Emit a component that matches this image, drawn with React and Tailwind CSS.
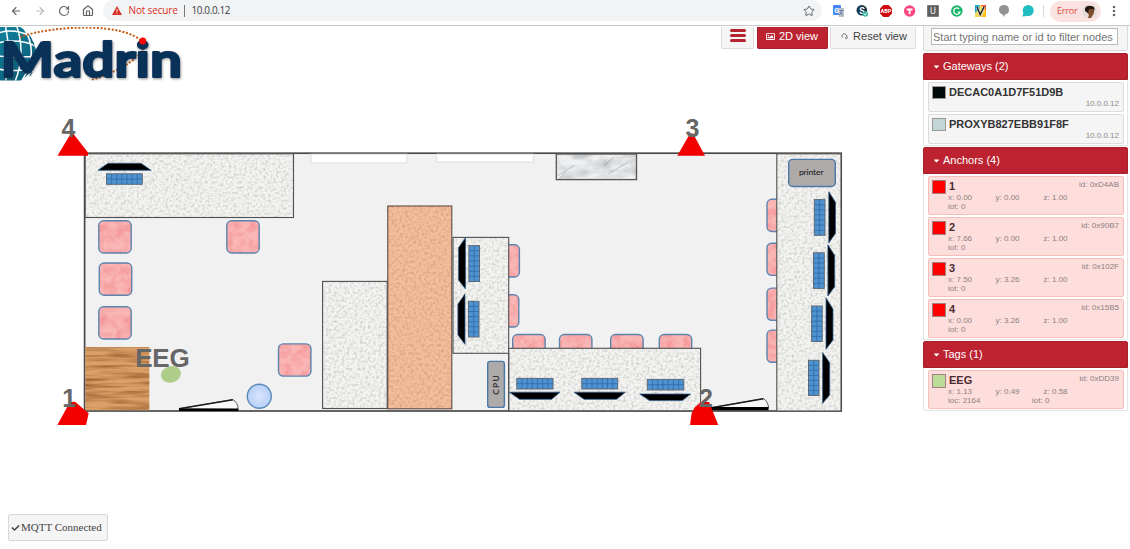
import React from "react";
import { ArrowLeft, ArrowRight, RotateCw, House, Star, MoreVertical } from "lucide-react";
import { FaCheck, FaCaretDown, FaRegImage } from "react-icons/fa";

const r = (x1, y1, x2, y2) => ({ x: x1, y: y1, width: x2 - x1, height: y2 - y1 });

const chairs = [
  [98.8, 220.8], [226.8, 220.8], [99.3, 263], [98.8, 306.8], [278.5, 343.9],
  [487, 244.8], [486.4, 294.8], [512.7, 334.5], [559.5, 334.5], [610.7, 334.5], [659.3, 334.5],
  [767, 199.3], [767, 243.2], [767, 288.1], [767, 330.1],
];

const keyboards = [
  [106.5, 173.8, 142.3, 184.3], [468.9, 245.6, 479.5, 281.5], [468.4, 301.3, 479, 337],
  [516.8, 378.4, 553, 389], [581.8, 378.4, 617.7, 389], [647.3, 379.4, 683.8, 390],
  [814.3, 199.6, 825, 235.3], [813.5, 252.8, 824.3, 288.4], [811.6, 306, 822.2, 341.5],
  [808.5, 360.3, 819, 395.5],
];

const monitors = [
  "98,170.3 108,163.3 141,163.3 151,170.3",
  "465.5,237.7 458.5,247.7 458.5,280 465.5,289",
  "465,294 457.9,304 457.9,335 465,344.3",
  "509.5,392.2 560,392.2 551.7,399.3 519.5,399.3",
  "574,392.2 625.3,392.2 616.7,399.3 584,399.3",
  "639.7,394 690.7,394 682.3,400.6 649.5,400.6",
  "828.8,191.7 835.5,202.3 835.5,233.3 828.8,243",
  "827.9,244.7 834.7,255.5 834.7,286.7 827.9,296",
  "826,297.9 833,309 833,340 826,349.3",
  "822.6,352.5 829.7,362.7 829.7,395 822.6,403.3",
];

function Texture({ id, freq, seed = 2, octaves = 2, matrix }) {
  return (
    <filter id={id} x="0" y="0" width="1" height="1" colorInterpolationFilters="sRGB">
      <feTurbulence type="fractalNoise" baseFrequency={freq} numOctaves={octaves} seed={seed} />
      <feColorMatrix type="matrix" values={matrix} />
      <feComposite in2="SourceAlpha" operator="in" result="n" />
      <feMerge>
        <feMergeNode in="SourceGraphic" />
        <feMergeNode in="n" />
      </feMerge>
    </filter>
  );
}

function Keyboard({ box }) {
  const [x1, y1, x2, y2] = box;
  const w = x2 - x1;
  const h = y2 - y1;
  const wide = w > h;
  const cols = wide ? 7 : 2;
  const rows = wide ? 2 : 7;
  const lines = [];
  for (let i = 1; i < cols; i++) lines.push(`M${x1 + (w * i) / cols} ${y1}v${h}`);
  for (let i = 1; i < rows; i++) lines.push(`M${x1} ${y1 + (h * i) / rows}h${w}`);
  return (
    <g>
      <rect {...r(x1, y1, x2, y2)} fill="#4f92d0" stroke="#5f6a76" strokeWidth="1" />
      <path d={lines.join("")} stroke="#2a659f" strokeWidth="0.7" />
    </g>
  );
}

function Desk({ box, fill = "#f3f3f1", filter = "url(#granite)", stroke = "#505050" }) {
  return (
    <g>
      <rect {...r(...box)} fill={fill} filter={filter} />
      <rect {...r(...box)} fill="none" stroke={stroke} strokeWidth="1.1" />
    </g>
  );
}

function FloorPlan() {
  return (
    <svg className="block h-[423px] w-[923px]" viewBox="0 82 923 423">
      <defs>
        <Texture id="granite" freq="0.38" matrix="0 0 0 0 .5 0 0 0 0 .5 0 0 0 0 .49 .8 0 0 0 -.35" />
        <Texture id="cork" freq="0.36" seed={7} matrix="0 0 0 0 .62 0 0 0 0 .42 0 0 0 0 .32 .8 0 0 0 -.34" />
        <Texture id="fabric" freq="0.12" seed={4} octaves={3} matrix="0 0 0 0 .94 0 0 0 0 .5 0 0 0 0 .5 1.2 0 0 0 -.45" />
        <Texture id="wood" freq="0.018 0.26" seed={5} octaves={3} matrix="0 0 0 0 .48 0 0 0 0 .27 0 0 0 0 .1 1.5 0 0 0 -.6" />
        <Texture id="marble" freq="0.045 0.1" seed={9} octaves={3} matrix="0 0 0 0 .55 0 0 0 0 .57 0 0 0 0 .59 1.1 0 0 0 -.42" />
        <radialGradient id="stool">
          <stop offset="0" stopColor="#d9e4fb" />
          <stop offset="1" stopColor="#b7d0f8" />
        </radialGradient>
      </defs>

      <rect {...r(84.6, 153.2, 841.2, 411)} fill="#f1f1f1" stroke="#4a4a4a" strokeWidth="1.7" />
      <rect {...r(311, 154.2, 407, 162.8)} fill="#fff" stroke="#dedede" strokeWidth="1" />
      <rect {...r(436.8, 154.2, 533.3, 162)} fill="#fff" stroke="#dedede" strokeWidth="1" />

      {chairs.map(([x, y]) => (
        <g key={`${x}-${y}`}>
          <rect x={x} y={y} width="32.4" height="32.2" rx="4.8" fill="#fab5b5" filter="url(#fabric)" />
          <rect x={x} y={y} width="32.4" height="32.2" rx="4.8" fill="none" stroke="#5d83af" strokeWidth="1.4" />
        </g>
      ))}

      <Desk box={[85.2, 153.8, 293.5, 217.5]} />
      <Desk box={[322.6, 281.4, 387.2, 408.5]} />
      <Desk box={[387.8, 206, 451.8, 408.8]} fill="#f4bd9b" filter="url(#cork)" stroke="#5e4b40" />
      <Desk box={[453, 237.4, 508.7, 353.3]} />
      <Desk box={[508.7, 348.3, 700.6, 410.8]} />
      <Desk box={[776.8, 153.8, 841, 411]} />
      <path d="M508.7 353V411" stroke="#505050" strokeWidth="1.1" />
      <rect {...r(556.3, 154, 636.5, 179.6)} fill="#eff0f1" filter="url(#marble)" />
      <path d="M557 176L575 165M604 166L614 157M608 174L628 162M559 179L566 172" stroke="#9a9da0" strokeWidth="1.2" opacity=".45" />
      <rect {...r(556.3, 154, 636.5, 179.6)} fill="none" stroke="#555" strokeWidth="1.3" />
      <rect {...r(85.4, 347, 149.3, 410.2)} fill="#dba067" filter="url(#wood)" />

      {keyboards.map((box) => <Keyboard key={box.join()} box={box} />)}
      {monitors.map((points) => (
        <polygon key={points} points={points} fill="#000" stroke="#315e8d" strokeWidth=".8" />
      ))}

      <rect {...r(788.7, 159.4, 835.3, 186.5)} rx="4" fill="#aeaaaa" stroke="#4b78a8" strokeWidth="1.4" />
      <text x="811.2" y="175.2" textAnchor="middle" textLength="24.5" fontSize="8.4" fill="#1f1f1f" stroke="#1f1f1f" strokeWidth=".1" className="font-['Lato',sans-serif]">printer</text>
      <rect {...r(487.7, 361.4, 504.4, 407.4)} rx="2.5" fill="#aeaaaa" stroke="#4b78a8" strokeWidth="1.4" />
      <text transform="translate(498.8 385) rotate(-90)" textAnchor="middle" textLength="19.5" fontSize="8.4" fill="#333" className="font-['Lato',sans-serif] font-bold">CPU</text>

      <circle cx="259.3" cy="396.3" r="12" fill="url(#stool)" stroke="#5d8ab8" strokeWidth="1.4" />

      <g fill="#f8f8f8" stroke="#1c1c1c">
        <path d="M179 408.8L232.8 399.6Q238 402.5 238.2 409.5Z" strokeWidth=".7" />
        <path d="M179 408.8L232.8 399.8" strokeWidth="1.5" />
        <path d="M179 409.8H238.3" stroke="#000" strokeWidth="2.6" />
        <path d="M710 408L763.3 398.6Q768.3 401.5 768.5 408Z" strokeWidth=".7" />
        <path d="M710 408L763.3 398.8" strokeWidth="1.4" />
        <path d="M710 408.7H768.5" stroke="#000" strokeWidth="3.2" />
      </g>

      <g fill="#f20000">
        <polygon points="57.5,155.8 70.5,134 73.5,134 88,152.6 88,155.8" />
        <polygon points="57.3,425 70,402 75,401.7 88.7,413.3 86,425" />
        <polygon points="677.3,155.8 690,133.5 693,133.5 705,155.8" />
        <polygon points="690,425 691.7,413 695,407 701,402 709,402 718.3,425" />
      </g>
      <ellipse cx="171" cy="374.4" rx="10.1" ry="8.2" transform="rotate(-14 171 374.4)" fill="#aecd88" />
      <g fill="#666" fontSize="25" className="font-['Liberation_Sans',sans-serif] font-bold">
        <text x="61.6" y="137.3">4</text>
        <text x="685.6" y="136.8">3</text>
        <text x="62.2" y="407">1</text>
        <text x="699" y="407">2</text>
        <text x="135.2" y="366.8" fontSize="26" textLength="54.5">EEG</text>
      </g>
    </svg>
  );
}

function Logo() {
  return (
    <svg className="block h-[64px] w-[190px]" viewBox="0 26 190 64">
      <defs>
        <linearGradient id="sea" x1="0" y1="0" x2="1" y2="1">
          <stop offset="0" stopColor="#168fac" />
          <stop offset="1" stopColor="#075873" />
        </linearGradient>
        <filter id="lift" x="-10%" y="-10%" width="120%" height="130%">
          <feDropShadow dx=".7" dy="1.2" stdDeviation=".9" floodColor="#333" floodOpacity=".5" />
        </filter>
        <clipPath id="band"><rect x="0" y="27" width="190" height="53.5" /></clipPath>
      </defs>
      <g clipPath="url(#band)">
        <circle cx="4" cy="54" r="31.5" fill="url(#sea)" />
        <g fill="none" stroke="#fff" strokeWidth="1.5">
          <path d="M5 24Q12 54 5 84M16 24Q27 54 14 84M24 28Q40 54 21 82M-2 33Q14 28 30 36M-2 43Q18 38 36 46M-2 56Q18 58 37 56M-2 69Q18 73 34 67" />
        </g>
        <path d="M29 35Q42 54 30 76" fill="none" stroke="#0a627c" strokeWidth="1" strokeDasharray="5 1.5" />
        <path d="M20 37C54 25 127 22 143 43C148 54 121 71 90 80.5" fill="none" stroke="#c55a11" strokeWidth="2" strokeDasharray="2 1.7" />
      </g>
      <text x="0.5" y="76.6" textLength="181.5" lengthAdjust="spacingAndGlyphs" fontSize="48.5" fill="#07335a" stroke="#07335a" strokeWidth="2.2" strokeLinejoin="round" filter="url(#lift)" className="font-['Lato',sans-serif] font-bold">Madrin</text>
      <circle cx="142.8" cy="41" r="3.5" fill="#ff0000" />
    </svg>
  );
}

function Extensions() {
  return (
    <svg className="block h-[22px] w-[210px] shrink-0" viewBox="828 0 210 22">
      <rect x="833" y="5" width="8" height="10" rx="1" fill="#4285f4" />
      <path d="M838 8H844V17H839Z" fill="#b9c0cc" />
      <path d="M839.5 10.5h4M841.5 10v1.5q-.5 2.5-2.5 3.5M840 12q1 2 3 3" stroke="#5270a8" strokeWidth=".8" fill="none" />
      <text x="834.2" y="12.7" fontSize="7" fill="#fff" className="font-['Roboto',sans-serif] font-bold">G</text>
      <circle cx="861.8" cy="10.3" r="5.3" fill="#15374b" />
      <text x="859.2" y="13.6" fontSize="9" fill="#fff" className="font-['Roboto',sans-serif] font-bold">S</text>
      <circle cx="865.3" cy="14" r="2.8" fill="#43b9a5" />
      <path d="M864 14l1 1 1.7-2" stroke="#fff" strokeWidth=".8" fill="none" />
      <polygon points="883.4,5 888.6,5 892,8.4 892,13.6 888.6,17 883.4,17 880,13.6 880,8.4" fill="#cf0a10" />
      <text x="886" y="13.2" textAnchor="middle" fontSize="5.6" fill="#fff" className="font-['Roboto',sans-serif] font-bold">ABP</text>
      <circle cx="909.6" cy="11" r="5.7" fill="#fc4680" />
      <path d="M906.7 8.6h5.8v2h-2v3.7h-1.8v-3.7h-2z" fill="#fff" />
      <rect x="927.2" y="5.2" width="11.6" height="11.6" fill="#5e5e5e" />
      <text x="933" y="14.3" textAnchor="middle" fontSize="9" fill="#eee" className="font-['Roboto',sans-serif]">U</text>
      <circle cx="956.8" cy="11" r="5.8" fill="#17b56a" />
      <path d="M959.2 8.8A3.2 3.2 0 1 0 960 12h-2.2" fill="none" stroke="#fff" strokeWidth="1.2" />
      <rect x="975" y="5" width="11" height="12" fill="#f0d85a" />
      <path d="M975 5h4.5v4L975 13z" fill="#16a7c7" />
      <path d="M981 5h5v6z" fill="#f45531" />
      <path d="M982 17l4-8v8z" fill="#ffbe1a" />
      <path d="M977 7l3.2 7.5 4-8" stroke="#fff" strokeWidth="2.6" fill="none" />
      <path d="M977 7l3.2 7.5 4-8" stroke="#232323" strokeWidth="1.6" fill="none" />
      <path d="M999 9.8a5 4.8 0 1 1 6 4.7l-1 2.5-1.4-2.5A5 4.8 0 0 1 999 9.8z" fill="#929292" />
      <circle cx="1028.2" cy="10.5" r="5.5" fill="#20bec0" />
      <path d="M1024 12l-1.8 4.6 5-.7z" fill="#20bec0" />
    </svg>
  );
}

function BrowserBar() {
  return (
    <header className="flex h-[26px] shrink-0 items-start border-b border-[#c9c9c9] bg-white font-['Open_Sans',sans-serif] text-[#5f6368]">
      <nav className="flex h-[22px] w-[103px] items-center gap-3 pl-2.5">
        <ArrowLeft size={12} strokeWidth={2.2} />
        <ArrowRight size={12} strokeWidth={2.2} className="text-[#b9bbbd]" />
        <RotateCw size={12} strokeWidth={2.4} />
        <House size={12} strokeWidth={2.4} />
      </nav>
      <div className="flex h-[21px] w-[719px] items-center rounded-full bg-[#f1f3f4] pr-[7px] pl-[8.5px] leading-[21px]">
        <svg className="h-[9px] w-[10px]" viewBox="0 0 10 9">
          <path d="M5 0L10 9H0Z" fill="#d93025" />
          <path d="M5 3v3M5 6.8v1" stroke="#f1f3f4" strokeWidth="1" />
        </svg>
        <span className="ml-[7px] w-[55px] text-[10px] tracking-[-0.15px] whitespace-nowrap text-[#d93025]">Not secure</span>
        <span className="h-3 w-px bg-[#777]" />
        <span className="ml-[7px] text-[10px] tracking-[-0.4px] text-[#3c4043]">10.0.0.12</span>
        <Star size={12} strokeWidth={2} className="ml-auto" />
      </div>
      <div className="ml-1.5 flex h-[22px] items-center">
        <Extensions />
        <span className="ml-[5px] h-3 w-px bg-[#d5d7d9]" />
        <div className="ml-1.5 flex h-[21px] w-[51px] items-center justify-between rounded-full bg-[#fae2e0] pr-1 pl-[7px] text-[9px] tracking-[-0.2px] text-[#e0473b]">
          Error
          <svg className="h-[15px] w-[15px]" viewBox="0 0 15 15">
            <circle cx="7.5" cy="7.5" r="7.3" fill="#e5dcda" />
            <path d="M4 3q4-3 8 1v5l-3 5H6l1-3-3-4z" fill="#7d4d2c" />
            <path d="M3 7q-1-5 5-5t4 5l-1-2H7L6 9z" fill="#241813" />
          </svg>
        </div>
        <MoreVertical size={14} strokeWidth={2.4} className="ml-[5.5px]" />
      </div>
    </header>
  );
}

const anchors = [
  { name: "1", id: "0xD4AB", x: "0.00", y: "0.00", z: "1.00" },
  { name: "2", id: "0x90B7", x: "7.66", y: "0.00", z: "1.00" },
  { name: "3", id: "0x102F", x: "7.50", y: "3.26", z: "1.00" },
  { name: "4", id: "0x15B5", x: "0.00", y: "3.26", z: "1.00" },
];

function Section({ title, bodyClass, children }) {
  return (
    <section className="flex flex-col">
      <h2 className="flex h-[27px] items-center rounded-t-[2px] border border-[#a81f2c] bg-[#bc222f] pl-[9px] text-[11px] text-white">
        <FaCaretDown className="mr-[3px] h-[9px] w-[7px]" />
        {title}
      </h2>
      <div className={`flex flex-col rounded-b-[2px] border border-t-0 border-[#e4e4e4] pr-[3px] pl-1 ${bodyClass}`}>{children}</div>
    </section>
  );
}

function Gateway({ name, swatch }) {
  return (
    <article className="flex h-[30px] rounded-[2px] border border-[#dcdcdc] bg-[#f5f5f5] pt-[3px] pr-1 pl-[3px]">
      <span className={`h-[13px] w-[14px] shrink-0 border border-[#999] ${swatch}`} />
      <div className="flex grow flex-col pl-[3px]">
        <b className="text-[11px] leading-[13px] text-[#333]">{name}</b>
        <span className="self-end text-[8px] leading-[9px] text-[#888]">10.0.0.12</span>
      </div>
    </article>
  );
}

function Node({ node, swatch, children }) {
  return (
    <article className="flex h-[39px] rounded-[2px] border border-[#f7bfba] bg-[#fddedd] pt-[3px] pr-1 pl-[3px] text-[8px] leading-[9px] text-[#8d8080]">
      <span className={`h-[14px] w-[14px] shrink-0 border border-[#a08080] ${swatch}`} />
      <div className="flex grow flex-col pl-[3px]">
        <div className="flex h-[13px] justify-between">
          <b className="text-[11px] leading-[12px] text-[#4c2c30]">{node.name}</b>
          <span>id: {node.id}</span>
        </div>
        <div className="-ml-px grid grid-cols-[47.5px_48px_1fr]">
          <span>x: {node.x}</span>
          <span>y: {node.y}</span>
          <span>z: {node.z}</span>
        </div>
        {children}
      </div>
    </article>
  );
}

function Sidebar() {
  return (
    <aside className="mr-0.5 flex w-[205px] shrink-0 flex-col">
      <div className="mb-[2px] flex h-[25px] items-start rounded-b-[2px] border border-t-0 border-[#dcdcdc] bg-[#f5f5f5] px-[7px] pt-[2px]">
        <input className="h-[17px] w-[187px] border border-[#bbb] bg-white px-px text-[11px] placeholder:text-[#757575]" placeholder="Start typing name or id to filter nodes" />
      </div>
      <Section title="Gateways (2)" bodyClass="mb-px h-[66px] gap-[2px] pt-[2px]">
        <Gateway name="DECAC0A1D7F51D9B" swatch="bg-[#000a08]" />
        <Gateway name="PROXYB827EBB91F8F" swatch="bg-[#c2d6d6]" />
      </Section>
      <Section title="Anchors (4)" bodyClass="mb-px h-[166px] gap-[2px] pt-[2px]">
        {anchors.map((a) => (
          <Node key={a.id} node={a} swatch="bg-[#ff0000]">
            <span className="-ml-px">iot: 0</span>
          </Node>
        ))}
      </Section>
      <Section title="Tags (1)" bodyClass="h-[43px] pt-[2px]">
        <Node node={{ name: "EEG", id: "0xDD39", x: "1.13", y: "0.49", z: "0.58" }} swatch="bg-[#bbdd99]">
          <div className="-ml-px flex">
            <span className="w-[84px]">loc: 2164</span>
            <span>iot: 0</span>
          </div>
        </Node>
      </Section>
    </aside>
  );
}

export default function App() {
  return (
    <div className="flex h-[549px] w-[1130px] flex-col overflow-hidden bg-white font-['Liberation_Sans',sans-serif]">
      <BrowserBar />
      <div className="flex grow">
        <main className="flex w-[923px] shrink-0 flex-col">
          <div className="flex h-[56px] items-start justify-between pr-[7px]">
            <Logo />
            <div className="flex h-[23px] gap-[2.5px] pt-px text-[11px]">
              <button className="flex w-[33px] items-center justify-center rounded-b-[2px] border border-t-0 border-[#ddd] bg-[#f5f5f5] pb-1">
                <span className="flex flex-col gap-[2px]">
                  <i className="h-[3px] w-4 rounded-full bg-[#b52331]" />
                  <i className="h-[3px] w-4 rounded-full bg-[#b52331]" />
                  <i className="h-[3px] w-4 rounded-full bg-[#b52331]" />
                </span>
              </button>
              <button className="flex w-[71px] items-center justify-center gap-1 rounded-b-[2px] border border-t-0 border-[#a81f2c] bg-[#bc222f] pb-[3px] text-white">
                <FaRegImage className="h-[9px] w-[9px]" />
                2D view
              </button>
              <button className="flex w-[86px] items-center justify-center gap-[5px] rounded-b-[2px] border border-t-0 border-[#ddd] bg-[#f5f5f5] pb-[3px] pl-[2px] text-[#444]">
                <svg className="h-[7px] w-[7px]" viewBox="0 0 7 7" fill="none" stroke="#666" strokeWidth=".9">
                  <path d="M1.4 4.6A2.4 2.4 0 1 1 5.6 4.2M3.9 4.6L5.6 5.8 6.6 3.9" />
                </svg>
                Reset view
              </button>
            </div>
          </div>
          <FloorPlan />
          <div className="mt-[9px] ml-2 flex h-[27px] w-[100px] items-center gap-px rounded-[2px] border border-[#d8d8d8] bg-[#f5f5f5] pl-[2px] font-['Liberation_Serif',serif] text-[11px] whitespace-nowrap text-[#444]">
            <FaCheck className="h-2 w-[9px]" />
            MQTT Connected
          </div>
        </main>
        <Sidebar />
      </div>
    </div>
  );
}
